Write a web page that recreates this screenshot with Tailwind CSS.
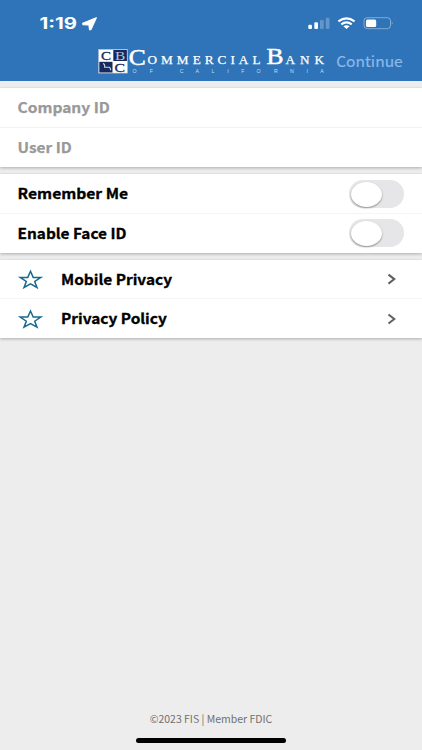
<!DOCTYPE html>
<html lang="en">
<head>
<meta charset="utf-8">
<title>Commercial Bank of California</title>
<script src="https://cdn.jsdelivr.net/npm/@tailwindcss/browser@4"></script>
</head>
<body class="bg-[#ededed] font-['Noto_Sans_CJK_SC','Noto_Sans',sans-serif]">
<div class="flex flex-col w-[422px] h-[750px] overflow-hidden">
  <header class="h-[81px] shrink-0 bg-[#2f74b8]">
    <svg class="block" width="422" height="81" viewBox="0 0 422 81">
      <!-- status bar -->
      <text x="39.5" y="29" font-family="Inter, sans-serif" font-weight="700" font-size="15.5" fill="#fff" textLength="37.5" lengthAdjust="spacingAndGlyphs">1:19</text>
      <path d="M96.3 17.8 L82.8 23.3 L83 24.6 L89 24.9 L89.6 29.6 L90.9 29.6 Z" fill="#fff" stroke="#fff" stroke-width="1.3" stroke-linejoin="round"/>
      <rect x="308.3" y="24.7" width="3.7" height="4.3" rx="1.1" fill="#fff"/>
      <rect x="314.3" y="22.3" width="3.7" height="6.7" rx="1.1" fill="#fff"/>
      <rect x="320" y="20" width="3.7" height="9" rx="1.1" fill="#fff" fill-opacity=".25"/>
      <rect x="325.8" y="17.7" width="3.7" height="11.3" rx="1.1" fill="#fff" fill-opacity=".25"/>
      <g fill="none" stroke="#fff" stroke-width="2.1">
        <path d="M338.4 21.4 Q346.5 15.4 354.6 21.4"/>
        <path d="M341.3 24.3 Q346.5 20.5 351.7 24.3"/>
      </g>
      <path d="M343.4 26.2 Q346.5 24.2 349.6 26.2 L346.5 29 Z" fill="#fff"/>
      <rect x="364" y="17.7" width="26.5" height="11" rx="3.2" fill="none" stroke="#fff" stroke-opacity=".4"/>
      <rect x="366" y="19.4" width="10.2" height="7.6" rx="1.5" fill="#fff"/>
      <path d="M391.8 21.3 Q393.4 23.2 391.8 25.1 Z" fill="#fff" fill-opacity=".5"/>
      <!-- logo -->
      <rect x="98.5" y="49.3" width="29" height="23.8" fill="#fff" stroke="#a9b5c9" stroke-width=".6"/>
      <rect x="113.3" y="50" width="13.6" height="11" fill="#172a60"/>
      <rect x="99.3" y="61.8" width="13.2" height="10.7" fill="#172a60"/>
      <path d="M103 63.6 Q105.2 64.4 104.6 67.2 H109 Q110.6 67.4 110.6 70.2" fill="none" stroke="#c9d1e2" stroke-width="1.1"/>
      <g font-family="Liberation Serif, serif" font-size="12.5" stroke-width=".3">
        <text x="101" y="60" fill="#172a60" stroke="#172a60" textLength="10" lengthAdjust="spacingAndGlyphs">C</text>
        <text x="115" y="60" fill="#b9c5da" textLength="10.3" lengthAdjust="spacingAndGlyphs">B</text>
        <text x="114.6" y="71.5" fill="#172a60" stroke="#172a60" textLength="10.5" lengthAdjust="spacingAndGlyphs">C</text>
      </g>
      <g font-family="Liberation Serif, serif" fill="#fff" stroke="#fff" stroke-width=".25">
        <text x="128.8" y="64.6" font-size="22.5" stroke-width=".5" textLength="17" lengthAdjust="spacingAndGlyphs">C</text>
        <text x="147.5" y="64.3" font-size="13.2" textLength="113" lengthAdjust="spacing">OMMERCIAL</text>
        <text x="266.5" y="64.3" font-size="22.5" stroke-width=".5" textLength="17" lengthAdjust="spacingAndGlyphs">B</text>
        <text x="285.5 300 314.5" y="64.3" font-size="13.2">ANK</text>
      </g>
      <g font-family="Liberation Sans, sans-serif" font-size="5.2" fill="#c8dcf2">
        <text y="72.8" x="132.5 149.7">OF</text>
        <text y="72.8" x="179.8 195.4 211.5 227.3 241.2 256.6 274 290 306.6 320.3">CALIFORNIA</text>
      </g>
      <text x="336.2" y="67.2" font-size="14.6" fill="#8cb8e8" stroke="#8cb8e8" stroke-width=".2" textLength="66.5" lengthAdjust="spacingAndGlyphs">Continue</text>
    </svg>
  </header>

  <main class="flex flex-col gap-[7px] pt-[7px] text-black">
    <section class="bg-white h-[79px] shadow-[0_1px_3px_rgba(0,0,0,0.28)]">
      <div class="h-[40px] border-b border-[#f2f2f2]">
        <svg class="block" width="422" height="39"><text x="17.6" y="25.4" font-weight="700" font-size="14.3" fill="#999" stroke="#999" stroke-width=".25" textLength="92.3" lengthAdjust="spacingAndGlyphs">Company ID</text></svg>
      </div>
      <svg class="block" width="422" height="39"><text x="17.6" y="24.8" font-weight="700" font-size="14.3" fill="#999" stroke="#999" stroke-width=".25" textLength="54.2" lengthAdjust="spacingAndGlyphs">User ID</text></svg>
    </section>

    <section class="bg-white h-[79px] shadow-[0_1px_3px_rgba(0,0,0,0.28)]">
      <div class="flex h-[40px] border-b border-[#f4f4f4]">
        <svg class="block" width="349" height="39"><text x="17.6" y="25.2" font-weight="700" font-size="14.3" stroke="#000" stroke-width=".3" textLength="110.5" lengthAdjust="spacingAndGlyphs">Remember Me</text></svg>
        <div class="mt-[6px] w-[55px] h-[28px] rounded-full bg-[#e6e6e8] p-[1.5px]">
          <div class="w-[31px] h-[25px] rounded-[50%] bg-white shadow-[0_1px_2px_rgba(0,0,0,0.4)]"></div>
        </div>
      </div>
      <div class="flex h-[39px]">
        <svg class="block" width="349" height="39"><text x="17.6" y="24.6" font-weight="700" font-size="14.3" stroke="#000" stroke-width=".3" textLength="108.8" lengthAdjust="spacingAndGlyphs">Enable Face ID</text></svg>
        <div class="mt-[5px] w-[55px] h-[28px] rounded-full bg-[#e6e6e8] p-[1.5px]">
          <div class="w-[31px] h-[25px] rounded-[50%] bg-white shadow-[0_1px_2px_rgba(0,0,0,0.4)]"></div>
        </div>
      </div>
    </section>

    <section class="bg-white h-[78px] shadow-[0_1px_3px_rgba(0,0,0,0.28)]">
      <div class="h-[39px] border-b border-[#f4f4f4]">
        <svg class="block" width="422" height="38">
          <path d="M30.5 11.3 L33.2 17.4 H40.8 L34.7 21.5 L37 27.5 L30.5 23.9 L24 27.5 L26.3 21.5 L20.2 17.4 H27.8 Z" fill="none" stroke="#176a91" stroke-width="1.5"/>
          <text x="61" y="24.7" font-weight="700" font-size="14.3" stroke="#000" stroke-width=".3" textLength="111" lengthAdjust="spacingAndGlyphs">Mobile Privacy</text>
          <path d="M388.5 14.6 L394.3 19.1 L388.5 23.6" fill="none" stroke="#606060" stroke-width="2"/>
        </svg>
      </div>
      <svg class="block" width="422" height="39">
        <path d="M30.5 12 L33.2 18.1 H40.8 L34.7 22.2 L37 28.2 L30.5 24.6 L24 28.2 L26.3 22.2 L20.2 18.1 H27.8 Z" fill="none" stroke="#176a91" stroke-width="1.5"/>
        <text x="61" y="25.4" font-weight="700" font-size="14.3" stroke="#000" stroke-width=".3" textLength="105.8" lengthAdjust="spacingAndGlyphs">Privacy Policy</text>
        <path d="M388.5 15.5 L394.3 20 L388.5 24.5" fill="none" stroke="#606060" stroke-width="2"/>
      </svg>
    </section>
  </main>

  <footer class="mt-auto flex flex-col items-center">
    <svg class="block" width="422" height="38"><text x="149.7" y="23" font-size="10.6" fill="#707070" textLength="122.6" lengthAdjust="spacingAndGlyphs">©2023 FIS | Member FDIC</text></svg>
    <div class="w-[150px] h-[4.5px] mb-[7.5px] rounded-full bg-black"></div>
  </footer>
</div>
</body>
</html>
